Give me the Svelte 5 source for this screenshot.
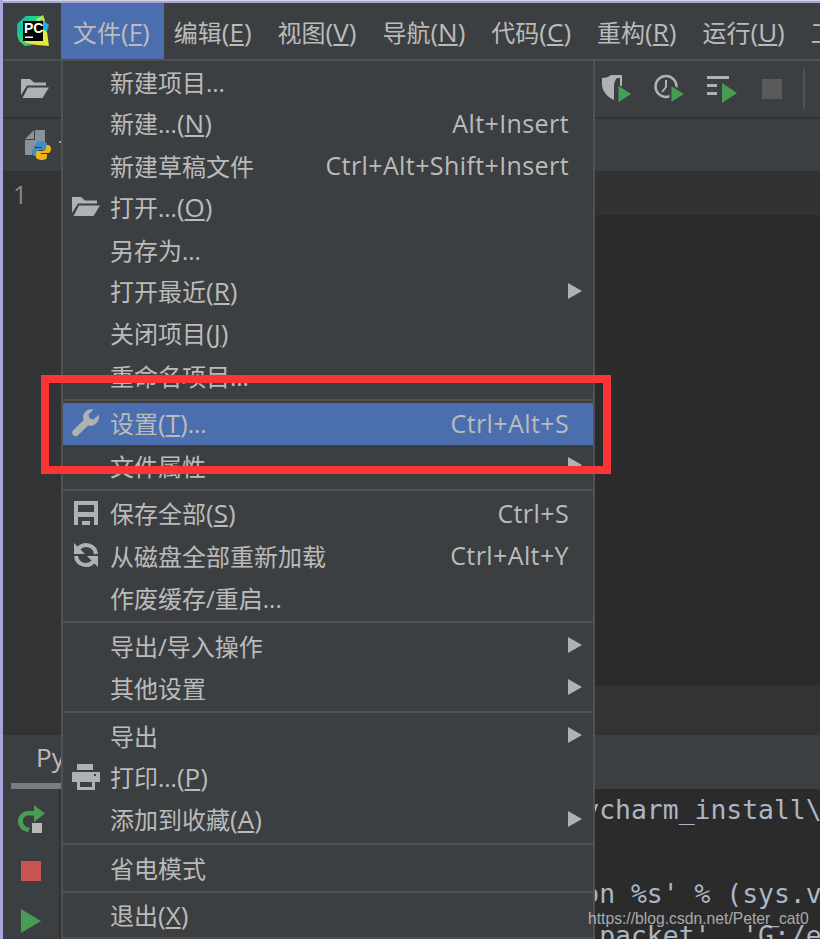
<script>
  const menuBar = [
    { label: '文件', key: 'F', active: true },
    { label: '编辑', key: 'E' },
    { label: '视图', key: 'V' },
    { label: '导航', key: 'N' },
    { label: '代码', key: 'C' },
    { label: '重构', key: 'R' },
    { label: '运行', key: 'U' },
    { label: '工具', key: 'T' },
  ];

  const groups = [
    [
      { label: '新建项目...' },
      { label: '新建...', key: 'N', shortcut: 'Alt+Insert' },
      { label: '新建草稿文件', shortcut: 'Ctrl+Alt+Shift+Insert' },
      { label: '打开...', key: 'O', icon: 'folder' },
      { label: '另存为...' },
      { label: '打开最近', key: 'R', arrow: true },
      { label: '关闭项目', key: 'J' },
      { label: '重命名项目...' },
    ],
    [
      { label: '设置', key: 'T', after: '...', shortcut: 'Ctrl+Alt+S', icon: 'wrench', active: true },
      { label: '文件属性', arrow: true },
    ],
    [
      { label: '保存全部', key: 'S', shortcut: 'Ctrl+S', icon: 'save' },
      { label: '从磁盘全部重新加载', shortcut: 'Ctrl+Alt+Y', icon: 'sync' },
      { label: '作废缓存/重启...' },
    ],
    [
      { label: '导出/导入操作', arrow: true },
      { label: '其他设置', arrow: true },
    ],
    [
      { label: '导出', arrow: true },
      { label: '打印...', key: 'P', icon: 'print' },
      { label: '添加到收藏', key: 'A', arrow: true },
    ],
    [{ label: '省电模式' }],
    [{ label: '退出', key: 'X' }],
  ];
</script>

{#snippet folder()}
  <svg width="28" height="20" viewBox="0 0 28 20" fill="#afb1b3">
    <path d="M0 0h9l4 3.500h12v3H6L0 16z" />
    <path d="M7 8.500h21L21.500 19H1.500z" />
  </svg>
{/snippet}

<div class="ide">
  <div class="titleline"></div>

  <header class="menubar">
    <svg class="logo" width="32" height="32" viewBox="0 0 32 32">
      <path d="M1 9 9 1h14l7 8-8 6L8 28l-6-2L0 20z" fill="#1fd08c" />
      <path d="M0 9 9 1l5 5H6v12L1 20z" fill="#17c2a0" />
      <path d="M19 4l7-4 2 6-6 6z" fill="#b6e84a" />
      <path d="M24 4l8 6-3 9-5-3z" fill="#17b4e8" />
      <path d="M26 14l4 3 2 14-12-1-14-2 2-3h18z" fill="#e6e63c" />
      <path d="M2 26l6-6v8l8 2-8 1z" fill="#3ccf6a" />
      <rect x="6" y="6" width="20" height="20" fill="#000" />
      <text x="7" y="18" class="logotext">PC</text>
      <rect x="8" y="21.500" width="8" height="1.500" fill="#fff" />
    </svg>
    <nav class="menus">
      {#each menuBar as m}
        <span class="menu" class:active={m.active}>{m.label}<span class="k">(<u>{m.key}</u>)</span></span>
      {/each}
    </nav>
  </header>

  <div class="toolbar">
    <span class="openbtn">{@render folder()}</span>
    <div class="runbtns">
      <svg width="32" height="30" viewBox="0 0 32 30">
        <path d="M1 4C5 4 8 3 10 1h11v11h-2V4h-3c-2 2-3 5-3 9v13C6 23 1 17 1 10z" fill="#afb1b3" />
        <path d="M17 11l14 9-14 9z" fill="#499c54" stroke="#3c3f41" stroke-width="1" />
      </svg>
      <svg width="32" height="30" viewBox="0 0 32 30">
        <circle cx="12" cy="12.500" r="10.500" fill="none" stroke="#afb1b3" stroke-width="2.500" />
        <path d="M12 6v7l-4 5" fill="none" stroke="#afb1b3" stroke-width="2" />
        <path d="M16.500 10.500l15 9.500-15 9.500z" fill="#499c54" stroke="#3c3f41" stroke-width="2" />
      </svg>
      <svg width="30" height="30" viewBox="0 0 30 30">
        <path d="M0 2h22v3H0zM0 10h10v3H0zM0 18h10v3H0z" fill="#afb1b3" />
        <path d="M15 9l15 10-15 10z" fill="#499c54" />
      </svg>
      <span class="stop"></span>
      <span class="divider"></span>
    </div>
  </div>

  <div class="tabs">
    <svg class="pyfile" width="27" height="30" viewBox="0 0 27 30">
      <path d="M0 9 9 0v9z" fill="#9aa7b0" opacity="0.8" />
      <path d="M10 0h10v12C13 12 8 16 7 25H0V10h10z" fill="#9aa7b0" opacity="0.8" />
      <path d="M16 11c-3 0-5 1-5 3v3h6v1h-7c-2 0-3 2-3 4s1 4 3 4h2v-3c0-2 2-3 4-3h4c1.500 0 2-1 2-2v-4c0-2-3-3-6-3z" fill="#3f8fc4" />
      <path d="M16 11c-3 0-5 1-5 3v3h6v1h-7c-2 0-3 2-3 4s1 4 3 4h2v-3c0-2 2-3 4-3h4c1.500 0 2-1 2-2v-4c0-2-3-3-6-3z" fill="#eab31f" transform="rotate(180 16.500 20.500)" />
    </svg>
    <span class="tabdot"></span>
  </div>

  <div class="editor">
    <div class="gutter">1</div>
    <div class="code"><div class="curline"></div></div>
  </div>

  <div class="strip"></div>

  <div class="panelhead">
    <span class="paneltab">Py</span>
  </div>

  <div class="panel">
    <aside class="sidetools">
      <svg width="28" height="28" viewBox="0 0 28 28" fill="#499c54">
        <path d="M17 0l11 8.500L17 17z" />
        <path d="M18 6h-6C5 6 1 11 1 16c0 6 4 10 10 11l2-4c-4-1-7-3-7-7s3-5.500 6-5.500h6z" />
        <rect x="15" y="18" width="10" height="10" fill="#b8b8b8" />
      </svg>
      <span class="redstop"></span>
      <svg width="20" height="24" viewBox="0 0 20 24"><path d="M0 0l20 12L0 24z" fill="#499c54" /></svg>
    </aside>
    <pre class="console">                                 ycharm_install\

                                 on %s' % (sys.v
                                  packet', 'G:/e</pre>
  </div>
</div>

<div class="dropdown">
  {#each groups as group, i}
    {#if i > 0}<div class="sep"></div>{/if}
    {#each group as item}
      <div class="row" class:active={item.active}>
        <span class="icon">
          {#if item.icon === 'folder'}
            {@render folder()}
          {:else if item.icon === 'wrench'}
            <svg width="28" height="28" viewBox="0 0 28 28" fill="#afb1b3">
              <path d="M27 5.500 21.500 10.500 17.500 9.500 16.500 5.500 21.500 .5C16 -.5 11 3 11 8.500c0 1 .2 2 .5 2.800L1.500 21c-2 2-1.500 4-.3 5.200 1.300 1.300 3.300 1.600 4.800.1L16 16.500c6 1.500 12-3.500 11-11z" />
            </svg>
          {:else if item.icon === 'save'}
            <svg width="24" height="24" viewBox="0 0 24 24" fill="#afb1b3" fill-rule="evenodd">
              <path d="M0 0h24v24H0zM4 4v7h16V4zM4 16v8h16v-8zM8 20h8v4H8z" />
            </svg>
          {:else if item.icon === 'sync'}
            <svg width="26" height="26" viewBox="0 0 26 26" fill="none" stroke="#afb1b3" stroke-width="4">
              <path d="M23 12A10 10 0 0 0 6 6L4 8" />
              <path d="M3 14a10 10 0 0 0 17 6l2-2" />
              <path d="M1 1v11h11zM25 25V14H14z" fill="#afb1b3" stroke="none" />
            </svg>
          {:else if item.icon === 'print'}
            <svg width="28" height="26" viewBox="0 0 28 26" fill="#afb1b3" fill-rule="evenodd">
              <path d="M5 0h16v6H5z" />
              <path d="M1 8h26a1 1 0 0 1 1 1v9H0V9a1 1 0 0 1 1-1zM22 10v2h2v-2z" />
              <path d="M5 18h18v8H5zM8 18v5h12v-5z" />
            </svg>
          {/if}
        </span>
        <span class="label">{item.label}{#if item.key}<span class="k">(<u>{item.key}</u>)</span>{/if}{item.after ?? ''}</span>
        {#if item.shortcut}<span class="shortcut">{item.shortcut}</span>{/if}
        {#if item.arrow}<span class="arrow"></span>{/if}
      </div>
    {/each}
  {/each}
</div>

<div class="callout"></div>
<div class="watermark">https://blog.csdn.net/Peter_cat0</div>

<style>
  :global(body) {
    margin: 0;
    overflow: hidden;
    background: #3c3f41;
  }

  .ide {
    width: 820px;
    height: 939px;
    box-sizing: border-box;
    border-left: 3px solid #a9a4dc;
    display: flex;
    flex-direction: column;
    background: #3c3f41;
    color: #bbb;
    font-family: 'Open Sans', 'Noto Sans CJK SC', sans-serif;
    font-size: 24px;
    overflow: hidden;
  }

  .titleline {
    height: 3px;
    box-sizing: border-box;
    border-top: 1px solid #d6d5e6;
    background: #a9a4dc;
    flex: none;
  }

  .menubar {
    height: 56px;
    flex: none;
    display: flex;
    align-items: center;
    border-bottom: 2px solid #515151;
  }
  .logo {
    margin-left: 14px;
    margin-right: 12px;
    flex: none;
  }
  .logotext {
    font-family: 'Liberation Sans', sans-serif;
    font-weight: 700;
    font-size: 14px;
    fill: #fff;
  }
  .menus {
    display: flex;
    gap: 2px;
    height: 100%;
  }
  .menu {
    display: flex;
    align-items: baseline;
    padding: 11px 12px 0;
    white-space: pre;
    flex: none;
  }
  .menu.active {
    background: #4b6eaf;
    padding-right: 14px;
    margin-right: -4px;
  }
  .k {
    font-size: 26px;
  }
  u {
    text-underline-offset: 2px;
    text-decoration-thickness: 2px;
  }

  .toolbar {
    height: 56px;
    flex: none;
    display: flex;
    align-items: center;
    justify-content: space-between;
    border-bottom: 2px solid #323232;
  }
  .openbtn {
    display: flex;
    margin-left: 18px;
  }
  .runbtns {
    display: flex;
    align-items: center;
    gap: 21px;
    margin-right: 15px;
  }
  .stop {
    width: 20px;
    height: 20px;
    background: #5a5a5a;
    margin-left: 4px;
  }
  .divider {
    width: 2px;
    height: 40px;
    background: #515151;
  }

  .tabs {
    height: 52px;
    flex: none;
    display: flex;
    align-items: center;
    padding-left: 22px;
  }
  .tabdot {
    width: 2px;
    height: 2px;
    margin: 0 0 6px 7px;
    background: #8fa3b3;
  }

  .editor {
    flex: none;
    height: 515px;
    display: flex;
  }
  .gutter {
    width: 59px;
    background: #313335;
    padding: 6px 0 0 10px;
    box-sizing: border-box;
    font-family: 'Open Sans', sans-serif;
    color: #8a8a8a;
    font-size: 25px;
  }
  .code {
    flex: 1;
    background: #2b2b2b;
  }
  .curline {
    height: 44px;
    background: #323232;
  }

  .strip {
    height: 49px;
    flex: none;
    background: #313335;
  }

  .panelhead {
    height: 54px;
    flex: none;
    display: flex;
    align-items: flex-end;
    padding-left: 8px;
  }
  .paneltab {
    width: 50px;
    height: 50px;
    box-sizing: border-box;
    padding-left: 25px;
    font-size: 26px;
    border-bottom: 6px solid #787b80;
  }

  .panel {
    height: 150px;
    flex: none;
    display: flex;
    background: #2b2b2b;
    overflow: hidden;
  }
  .sidetools {
    width: 58px;
    flex: none;
    box-sizing: border-box;
    background: #3c3f41;
    border-right: 2px solid #323232;
    display: flex;
    flex-direction: column;
    align-items: center;
    gap: 28px;
    padding-top: 16px;
  }
  .redstop {
    width: 20px;
    height: 20px;
    background: #c75450;
  }
  .console {
    margin: 0 0 0 -2px;
    font-family: 'DejaVu Sans Mono', monospace;
    font-size: 26.4px;
    line-height: 42px;
    color: #a9b7c6;
    white-space: pre;
  }

  .dropdown {
    position: absolute;
    left: 61px;
    top: 59px;
    width: 534px;
    height: 880px;
    box-sizing: border-box;
    background: #3c3f41;
    border: 2px solid #515151;
    color: #bbb;
    font-family: 'Open Sans', 'Noto Sans CJK SC', sans-serif;
    font-size: 24px;
  }
  .row {
    height: 42px;
    box-sizing: border-box;
    display: flex;
    align-items: center;
    padding: 0 24px 2px 0;
    white-space: pre;
  }
  .row.active {
    background: #4b6eaf;
  }
  .icon {
    width: 47px;
    flex: none;
    display: flex;
    justify-content: center;
    padding-right: 2px;
    box-sizing: border-box;
  }
  .label {
    flex: 1;
  }
  .shortcut {
    font-size: 25px;
    letter-spacing: 0.4px;
  }
  .arrow {
    width: 0;
    height: 0;
    border-left: 14px solid #afb1b3;
    border-top: 8px solid transparent;
    border-bottom: 8px solid transparent;
    margin-right: -13px;
  }
  .sep {
    height: 2px;
    margin: 2px 0;
    background: #515151;
  }

  .callout {
    position: absolute;
    left: 41px;
    top: 375px;
    width: 570px;
    height: 99px;
    box-sizing: border-box;
    border: 8px solid #fb3535;
  }
  .watermark {
    position: absolute;
    left: 588px;
    top: 910px;
    font-family: 'Liberation Sans', sans-serif;
    font-size: 15.7px;
    color: rgba(255, 255, 255, 0.6);
    white-space: nowrap;
  }
</style>
